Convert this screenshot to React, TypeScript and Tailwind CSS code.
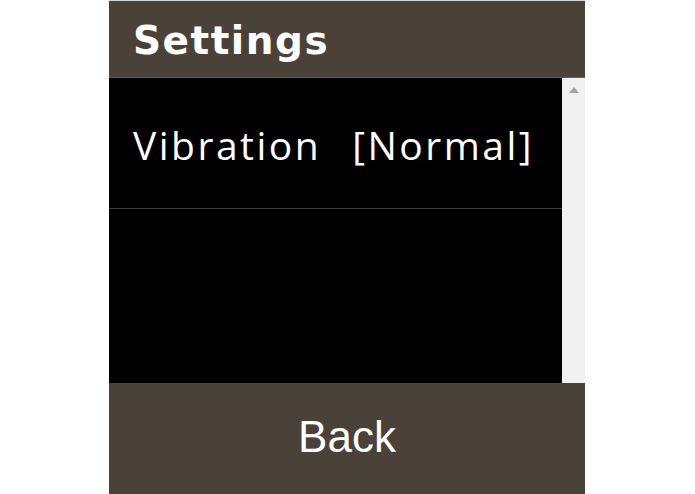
const App = () => {
  return (
    <div className="flex h-[494px] w-full bg-white pl-[109px]">
      <div className="flex h-[494px] w-[476px] flex-col border-t border-[#d6d6d6]">
        {/* Header */}
        <div className="flex h-[77px] shrink-0 items-center border-b border-[#6a5b48] bg-[#4a4238] px-6 pt-[3px]">
          <h1 className="text-[39px] font-bold leading-none tracking-[1.5px] text-white [font-family:'DejaVu_Sans',Verdana,sans-serif]">
            Settings
          </h1>
        </div>

        {/* List */}
        <div className="flex min-h-0 flex-1 bg-black">
          <div className="flex-1">
            <div className="flex h-[131px] items-center gap-[31px] border-b border-[#3a3a3a] px-6 pt-[2px] text-[39px] leading-none tracking-[2.5px] text-white [font-family:'Open_Sans',sans-serif]">
              <span>Vibration</span>
              <span>[Normal]</span>
            </div>
          </div>
          <div className="flex w-[23px] shrink-0 justify-center bg-[#f0f0f0] pt-[9px]">
            <svg width="10" height="6" viewBox="0 0 10 6">
              <path d="M5 0 L10 6 L0 6 Z" fill="#a3a3a3" />
            </svg>
          </div>
        </div>

        {/* Footer */}
        <div className="flex h-[111px] shrink-0 items-center justify-center bg-[#4a4238] pb-[3px]">
          <button className="text-[44px] leading-none text-white [font-family:'Liberation_Sans',Arial,sans-serif]">
            Back
          </button>
        </div>
      </div>
    </div>
  );
};

export default App;
